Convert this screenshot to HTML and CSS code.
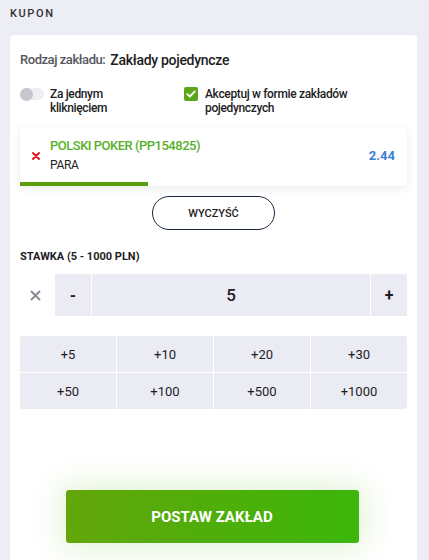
FILE: index.html
```html
<!DOCTYPE html>
<html lang="pl">
<head>
<meta charset="utf-8">
<link rel="stylesheet" href="styles.css">
</head>
<body>
<div class="title">KUPON</div>
<div class="card">
  <div class="type-row"><span class="type-label">Rodzaj zakładu:</span><span class="type-value">Zakłady pojedyncze</span></div>
  <div class="options">
    <div class="opt opt-left">
      <span class="toggle"><span class="knob"></span></span>
      <span class="opt-text">Za jednym<br>kliknięciem</span>
    </div>
    <div class="opt">
      <span class="checkbox"><svg width="10" height="8" viewBox="0 0 10 8"><path d="M1.2 4.1 L3.8 6.5 L8.8 1.4" fill="none" stroke="#fff" stroke-width="1.8" stroke-linecap="round" stroke-linejoin="round"/></svg></span>
      <span class="opt-text">Akceptuj w formie zakładów<br>pojedynczych</span>
    </div>
  </div>
  <div class="bet">
    <div class="bet-body">
      <svg class="bet-x" width="8" height="8" viewBox="0 0 8 8"><path d="M1 1 L7 7 M7 1 L1 7" stroke="#e2151b" stroke-width="1.9" stroke-linecap="round"/></svg>
      <div class="bet-info">
        <div class="bet-name">POLSKI POKER (PP154825)</div>
        <div class="bet-pick">PARA</div>
      </div>
      <div class="bet-odds">2.44</div>
    </div>
    <div class="bet-bar"><div class="bet-bar-fill" style="width:33%"></div></div>
  </div>
  <div class="clear-wrap"><button class="clear-btn">WYCZYŚĆ</button></div>
  <div class="stake-label">STAWKA (5 - 1000 PLN)</div>
  <div class="stake-row">
    <span class="stake-x"><svg width="11" height="11" viewBox="0 0 11 11"><path d="M1 1 L10 10 M10 1 L1 10" stroke="#8a8b96" stroke-width="2"/></svg></span>
    <span class="stake-btn">-</span>
    <span class="stake-input">5</span>
    <span class="stake-btn">+</span>
  </div>
  <div class="quick">
    <span class="q">+5</span><span class="q">+10</span><span class="q">+20</span><span class="q">+30</span>
    <span class="q">+50</span><span class="q">+100</span><span class="q">+500</span><span class="q">+1000</span>
  </div>
  <div class="submit-wrap"><button class="submit">POSTAW ZAKŁAD</button></div>
</div>
</body>
</html>
```
FILE: styles.css
```css
* { box-sizing: border-box; }
html, body { margin: 0; padding: 0; }
body {
  background: #ededf5;
  font-family: Roboto, "Liberation Sans", sans-serif;
  color: #1d1d24;
  overflow: hidden;
}
.title {
  height: 35px;
  padding: 7px 10px 0;
  font-size: 11px;
  line-height: 14px;
  font-weight: 500;
  letter-spacing: 1.6px;
  color: #333;
}
.card {
  margin: 0 12px 0 10px;
  background: #fff;
  border-radius: 4px 4px 0 0;
  padding: 17px 10px 40px;
  min-height: 540px;
}
.type-row {
  display: flex;
  gap: 5px;
  font-size: 13px;
  line-height: 16px;
  font-weight: 500;
}
.type-label { color: #55555d; letter-spacing: -0.45px; }
.type-value { color: #1d1d24; font-size: 14px; letter-spacing: -0.3px; }
.options {
  display: flex;
  margin-top: 19px;
}
.opt { display: flex; align-items: flex-start; }
.opt-left { width: 164px; gap: 6px; }
.opt + .opt { gap: 7px; }
.opt-text {
  font-size: 12px;
  line-height: 14px;
  font-weight: 500;
  letter-spacing: -0.35px;
  color: #1d1d24;
}
.toggle {
  position: relative;
  width: 24px;
  height: 12px;
  margin-top: 1px;
  border-radius: 6px;
  background: #eeeef3;
  flex: none;
}
.knob {
  position: absolute;
  left: 0;
  top: -0.5px;
  width: 13px;
  height: 13px;
  border-radius: 50%;
  background: #c6c6cd;
}
.checkbox {
  width: 14px;
  height: 14px;
  border-radius: 2px;
  background: #5aa51c;
  display: flex;
  align-items: center;
  justify-content: center;
  flex: none;
}
.bet {
  margin-top: 13px;
  background: #fff;
  box-shadow: 0 2px 10px rgba(30, 30, 60, 0.09);
  border-radius: 2px;
}
.bet-body {
  display: flex;
  align-items: center;
  padding: 9px 12px 9px 12px;
}
.bet-x { flex: none; margin-right: 10px; margin-top: 2px; }
.bet-info { flex: 1; }
.bet-name {
  font-size: 13px;
  line-height: 17px;
  font-weight: 500;
  letter-spacing: -0.5px;
  color: #58b02a;
}
.bet-pick {
  margin-top: 3px;
  font-size: 12px;
  line-height: 16px;
  letter-spacing: -0.3px;
  color: #1d1d24;
}
.bet-odds {
  font-size: 13px;
  font-weight: 700;
  color: #3b7fd2;
}
.bet-bar { height: 4px; }
.bet-bar-fill { height: 4px; background: #5a9f0b; }
.clear-wrap {
  display: flex;
  justify-content: center;
  margin-top: 10px;
}
.clear-btn {
  width: 123px;
  height: 34px;
  border: 1px solid #1b2741;
  border-radius: 17px;
  background: #fff;
  font-family: inherit;
  font-size: 11px;
  font-weight: 500;
  color: #1d1d24;
  padding: 0;
}
.stake-label {
  margin-top: 20px;
  font-size: 11px;
  line-height: 14px;
  font-weight: 700;
  color: #1d1d24;
}
.stake-row {
  display: flex;
  height: 42px;
  margin-top: 10px;
  gap: 1px;
}
.stake-x {
  width: 34px;
  display: flex;
  align-items: center;
  padding-left: 10px;
}
.stake-btn {
  width: 36px;
  background: #ebebf4;
  display: flex;
  align-items: center;
  justify-content: center;
  font-size: 16px;
  font-weight: 700;
}
.stake-input {
  flex: 1;
  background: #ebebf4;
  display: flex;
  align-items: center;
  justify-content: center;
  font-size: 17px;
  font-weight: 500;
}
.quick {
  margin-top: 20px;
  display: grid;
  grid-template-columns: repeat(4, 1fr);
  grid-auto-rows: 36px;
  gap: 1px;
  border-radius: 3px;
  overflow: hidden;
}
.q {
  background: #ebebf4;
  display: flex;
  align-items: center;
  justify-content: center;
  font-size: 13px;
  color: #1d1d24;
}
.submit-wrap {
  display: flex;
  justify-content: center;
  margin-top: 81px;
  padding-right: 3px;
}
.submit {
  width: 293px;
  height: 53px;
  border: 0;
  border-radius: 3px;
  background: linear-gradient(90deg, #63a60a 0%, #3bb60a 100%);
  box-shadow: 0 0 30px 6px rgba(100, 190, 40, 0.18);
  color: #fff;
  font-family: inherit;
  font-size: 15px;
  font-weight: 700;
}
```
